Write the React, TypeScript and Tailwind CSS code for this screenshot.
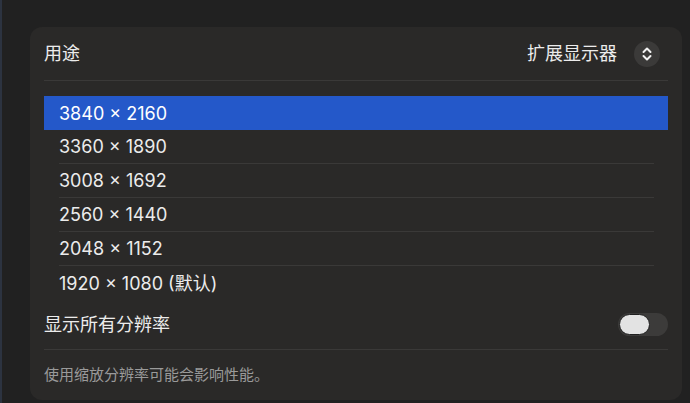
const resolutions = [
	"3840 × 2160",
	"3360 × 1890",
	"3008 × 1692",
	"2560 × 1440",
	"2048 × 1152",
	"1920 × 1080 (默认)",
];

const font = {
	fontFamily: '"Inter", "Noto Sans CJK SC", sans-serif',
};

const UpDownIcon = () => (
	<svg width="10" height="16" viewBox="0 0 10 16" fill="none">
		<path
			d="M1.5 6 L5 2.5 L8.5 6"
			stroke="#f2f2f2"
			strokeWidth="2"
			strokeLinecap="round"
			strokeLinejoin="round"
		/>
		<path
			d="M1.5 10 L5 13.5 L8.5 10"
			stroke="#f2f2f2"
			strokeWidth="2"
			strokeLinecap="round"
			strokeLinejoin="round"
		/>
	</svg>
);

export default function App() {
	return (
		<div
			className="w-[690px] h-[403px] bg-[#212121] border-l-2 border-[#2c3340] overflow-hidden"
			style={font}
		>
			<div className="ml-[28px] mt-[27px] w-[652px] h-[373px] rounded-[12px] bg-[#2a2928] px-[14px] flex flex-col">
				<div className="h-[54px] flex items-center justify-between border-b border-[#3a3938]">
					<span className="text-[18px] text-[#ececec]">用途</span>
					<div className="flex items-center gap-[17px]">
						<span className="text-[18px] text-[#ececec]">扩展显示器</span>
						<div className="w-[26px] h-[26px] mr-[8px] rounded-full bg-[#3b3a39] flex items-center justify-center">
							<UpDownIcon />
						</div>
					</div>
				</div>

				<div className="mt-[15px] flex flex-col">
					{resolutions.map((r, i) => (
						<div
							key={r}
							className={
								i === 0
									? "h-[34px] flex items-center pl-[15px] bg-[#2458c9] text-[18px] text-white"
									: "h-[34px] mx-[14px] flex items-center pl-[1px] text-[18px] text-[#ececec]"
							}
						>
							<div
								className={
									i > 0 && i < resolutions.length - 1
										? "h-full w-full flex items-center border-b border-[#3a3938]"
										: "h-full w-full flex items-center"
								}
							>
								{r}
							</div>
						</div>
					))}
				</div>

				<div className="h-[50px] flex items-center justify-between border-b border-[#3a3938]">
					<span className="text-[18px] text-[#ececec]">显示所有分辨率</span>
					<div className="w-[50px] h-[23px] rounded-full bg-[#3c3b3a] flex items-center pl-[1px]">
						<div className="w-[31px] h-[21px] rounded-full bg-[#e3e3e3] border border-[#202020]" />
					</div>
				</div>

				<div className="flex-1 flex items-center">
					<span className="text-[15px] text-[#9a9a9a]">
						使用缩放分辨率可能会影响性能。
					</span>
				</div>
			</div>
		</div>
	);
}
